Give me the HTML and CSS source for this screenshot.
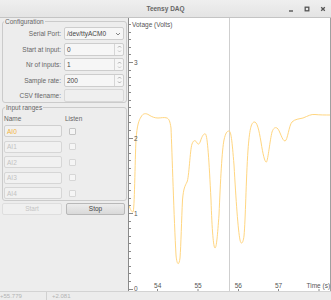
FILE: index.html
```html
<!DOCTYPE html>
<html lang="en">
<head>
  <meta charset="UTF-8">
  <title>Teensy DAQ</title>
  <link rel="stylesheet" href="styles.css">
</head>
<body>
  <div class="window">
    <header class="titlebar">
      <span></span>
      <span class="title">Teensy DAQ</span>
      <div class="controls">
        <svg width="6" height="6" viewBox="0 0 6 6"><path d="M1 5h4" stroke="#555" stroke-width="1.4"/></svg>
        <svg width="6" height="6" viewBox="0 0 6 6"><rect x="1.2" y="1.2" width="3.6" height="3.6" fill="none" stroke="#555" stroke-width="1.3"/></svg>
        <svg width="6" height="6" viewBox="0 0 6 6"><path d="M1.2 1.2l3.6 3.6M4.8 1.2l-3.6 3.6" stroke="#555" stroke-width="1.3"/></svg>
      </div>
    </header>

    <div class="main">
      <aside class="panel">
        <fieldset class="group config">
          <legend>Configuration</legend>
          <div class="form-grid">
            <label>Serial Port:</label>
            <div class="field combo">
              <span>/dev/ttyACM0</span>
              <svg width="6" height="4" viewBox="0 0 6 4"><path d="M1 1l2 2 2-2" fill="none" stroke="#777" stroke-width="0.9"/></svg>
            </div>

            <label>Start at input:</label>
            <div class="field spin">
              <span>0</span>
              <div class="arrows">
                <svg width="5" height="3" viewBox="0 0 5 3"><path d="M1 2.5l1.5-1.5 1.5 1.5" fill="none" stroke="#999" stroke-width="0.8"/></svg>
                <svg width="5" height="3" viewBox="0 0 5 3"><path d="M1 0.5l1.5 1.5 1.5-1.5" fill="none" stroke="#bbb" stroke-width="0.8"/></svg>
              </div>
            </div>

            <label>Nr of inputs:</label>
            <div class="field spin">
              <span>1</span>
              <div class="arrows">
                <svg width="5" height="3" viewBox="0 0 5 3"><path d="M1 2.5l1.5-1.5 1.5 1.5" fill="none" stroke="#999" stroke-width="0.8"/></svg>
                <svg width="5" height="3" viewBox="0 0 5 3"><path d="M1 0.5l1.5 1.5 1.5-1.5" fill="none" stroke="#bbb" stroke-width="0.8"/></svg>
              </div>
            </div>

            <label>Sample rate:</label>
            <div class="field spin">
              <span>200</span>
              <div class="arrows">
                <svg width="5" height="3" viewBox="0 0 5 3"><path d="M1 2.5l1.5-1.5 1.5 1.5" fill="none" stroke="#999" stroke-width="0.8"/></svg>
                <svg width="5" height="3" viewBox="0 0 5 3"><path d="M1 0.5l1.5 1.5 1.5-1.5" fill="none" stroke="#999" stroke-width="0.8"/></svg>
              </div>
            </div>

            <label>CSV filename:</label>
            <div class="field disabled"></div>
          </div>
        </fieldset>

        <fieldset class="group ranges">
          <legend>Input ranges</legend>
          <div class="range-grid">
            <span class="head">Name</span>
            <span class="head">Listen</span>

            <div class="field active">AI0</div><div class="check"></div>
            <div class="field disabled">AI1</div><div class="check off"></div>
            <div class="field disabled">AI2</div><div class="check off"></div>
            <div class="field disabled">AI3</div><div class="check off"></div>
            <div class="field disabled">AI4</div><div class="check off"></div>
          </div>
        </fieldset>

        <div class="actions">
          <button class="btn start" disabled>Start</button>
          <button class="btn stop">Stop</button>
        </div>
      </aside>

      <div class="plot">
        <svg width="203" height="273" viewBox="0 0 203 273">
          <!-- cursor -->
          <path d="M101.5 0v273" stroke="#cfcfcf"/>

          <!-- voltage trace -->
          <g transform="translate(-128,-18)">
            <path fill="none" stroke="#ffd680" stroke-width="1"
              d="M128.5,204 C130,208 131,212 133,212 C134.5,212 135,160 136,140 C137,125 139,120 141,117 C143,113 146,113 149,115 C152,117 155,118 158,118 C161,118 164,117 167,118 C169,119 170,121 171,128 C172,150 174,220 176,255 C177,266 179,266 180,258 C181,245 181.5,220 182.5,200 C183.5,188 185,186 187,182 C189,178 190,150 192,144 C193.5,140 195,140 196.5,142 C198,145 199,145 200.5,141 C202,136 204,133 205.5,134 C207.5,136 209,160 211,200 C212,230 213.5,248 215,248 C216.5,248 217.5,235 219,215 C220.5,180 222,150 224,140 C225.5,133 227,131 229,131 C231,131 232,140 234,165 C236,200 238,230 240,240 C241,245 243,244 244,236 C245.5,220 246,180 248,150 C249.5,130 251,123 254,122 C257,121 259,130 261,142 C263,155 265,163 266.5,162 C268,160 270,140 272,132 C273.5,128 275,127 277,128 C280,130 282,141 285,141 C287.5,141 289,125 292,122 C295,119 299,119 303,118 C308,116 311,114 315,114.5 C320,115 325,115 331,115"/>
          </g>

          <!-- axes -->
          <path d="M0.5 0v273" stroke="#8a8a8a"/>
          <path d="M202.5 0v273" stroke="#a0a0a0"/>
          <path stroke="#8a8a8a" d="M0 263.5h3M0 255.5h3M0 248.5h3M0 240.5h3M0 233.5h3M0 225.5h3M0 218.5h3M0 210.5h3M0 203.5h3M0 187.5h3M0 180.5h3M0 172.5h3M0 165.5h3M0 157.5h3M0 150.5h3M0 142.5h3M0 135.5h3M0 127.5h3M0 112.5h3M0 104.5h3M0 97.5h3M0 89.5h3M0 82.5h3M0 74.5h3M0 67.5h3M0 59.5h3M0 52.5h3M0 36.5h3M0 29.5h3M0 21.5h3M0 14.5h3M0 6.5h3"/>
          <path stroke="#8a8a8a" d="M0 271.5h5M0 195.5h5M0 120.5h5M0 44.5h5"/>
          <path stroke="#8a8a8a" d="M29.5 271v2M70 271v2M110.5 271v2M150.5 271v2M191 271v2"/>

          <g class="axis-text">
            <text x="4" y="8.5">Votage (Volts)</text>
            <text x="6" y="47">3</text>
            <text x="6" y="123.3">2</text>
            <text x="6" y="198.3">1</text>
            <text x="6" y="272.5">0</text>
            <text x="29.7" y="269.5" text-anchor="middle">54</text>
            <text x="70" y="269.5" text-anchor="middle">55</text>
            <text x="110.3" y="269.5" text-anchor="middle">56</text>
            <text x="150.6" y="269.5" text-anchor="middle">57</text>
            <text x="178.5" y="269.5">Time (s)</text>
          </g>
        </svg>
      </div>
    </div>

    <footer class="status">
      <span class="cell">+55.779</span>
      <span class="cell">+2.081</span>
    </footer>
  </div>
</body>
</html>
```

FILE: styles.css
```css
body {
  margin: 0;
  font-family: "Liberation Sans", Arial, sans-serif;
  font-size: 6.5px;
  color: #555;
}
.window {
  width: 331px;
  height: 300px;
  display: flex;
  flex-direction: column;
  background: #ededed;
  overflow: hidden;
}
.titlebar {
  height: 17px;
  flex: none;
  display: grid;
  grid-template-columns: 1fr auto 1fr;
  align-items: center;
  background: linear-gradient(#efefef, #e4e4e4);
  border-bottom: 1px solid #c4c4c4;
}
.title {
  font-weight: bold;
  color: #666;
  font-size: 6.5px;
}
.controls {
  justify-self: end;
  display: flex;
  gap: 10px;
  padding-right: 5px;
}
.controls svg {
  display: block;
}
.main {
  display: flex;
  height: 273px;
  flex: none;
}
.panel {
  width: 128px;
  flex: none;
  display: flex;
  flex-direction: column;
}
.plot {
  flex: 1;
  background: #fff;
}
.plot svg {
  display: block;
}
.axis-text text {
  font-family: "Liberation Sans", Arial, sans-serif;
  font-size: 6.5px;
  fill: #555;
}

/* group boxes */
.group {
  margin: 0 1px 0 2px;
  padding: 0 2px 0 0;
  border: 1px solid #cbcbcb;
  border-radius: 3px;
}
.group legend {
  padding: 0 1px;
  margin-left: 1px;
  line-height: 7px;
  color: #666;
}
.config .form-grid {
  padding-top: 2px;
  display: grid;
  grid-template-columns: 58px 60px;
  grid-auto-rows: 13px;
  column-gap: 3px;
  row-gap: 2.6px;
  align-items: center;
}
.form-grid label {
  text-align: right;
  color: #666;
}
.field {
  box-sizing: border-box;
  height: 100%;
  border: 1px solid #cdcdcd;
  border-radius: 2px;
  background: #f6f6f6;
  display: flex;
  align-items: center;
  padding-left: 2px;
  color: #444;
}
.field.disabled {
  background: #efefef;
  border-color: #d8d8d8;
  color: #c2c2c2;
}
.combo {
  justify-content: space-between;
  padding-right: 2px;
}
.combo svg {
  display: block;
}
.spin span {
  flex: 1;
}
.spin .arrows {
  width: 8px;
  height: 100%;
  border-left: 1px solid #d6d6d6;
  display: flex;
  flex-direction: column;
  justify-content: space-evenly;
  align-items: center;
}
.spin .arrows svg {
  display: block;
}

.ranges {
  margin-top: 1px;
  padding: 0 0 1px 1px;
}
.range-grid {
  padding-top: 3.5px;
  display: grid;
  grid-template-columns: 58px auto;
  grid-template-rows: 7px;
  grid-auto-rows: 12px;
  column-gap: 3px;
  row-gap: 3.5px;
  align-items: center;
}
.range-grid .head {
  color: #666;
  line-height: 7px;
}
.range-grid .field {
  background: #f1f1f1;
  border-color: #d6d6d6;
  padding-left: 2px;
}
.field.active {
  color: #f2b23c;
  border-color: #cfcfcf;
}
.check {
  width: 5px;
  height: 5px;
  margin-left: 4px;
  border: 1px solid #c4c4c4;
  border-radius: 1px;
  background: #f5f5f5;
}
.check.off {
  border-color: #d6d6d6;
}

.actions {
  display: flex;
  gap: 4px;
  padding: 0 2px;
  margin-top: 1.5px;
}
.btn {
  height: 12px;
  padding: 0;
  font-family: inherit;
  font-size: 6.5px;
  border-radius: 2px;
}
.btn.start {
  width: 60px;
  background: #f0f0f0;
  border: 1px solid #dedede;
  color: #c4c4c4;
}
.btn.stop {
  width: 59px;
  background: linear-gradient(#ececec, #d9d9d9);
  border: 1px solid #b8b8b8;
  color: #444;
}

.status {
  height: 8px;
  flex: none;
  display: flex;
  border-top: 1px solid #d3d3d3;
  background: #ececec;
  font-size: 6px;
  color: #b3b3b3;
  line-height: 8px;
}
.status .cell:first-child {
  width: 46px;
  border-right: 1px solid #d0d0d0;
}
.status .cell + .cell {
  padding-left: 5px;
}
```
